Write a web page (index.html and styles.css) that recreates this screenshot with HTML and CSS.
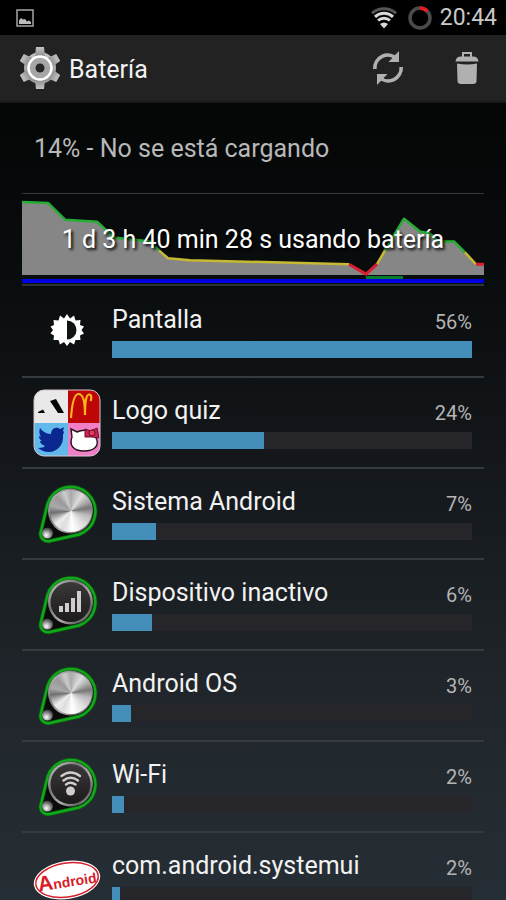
FILE: index.html
```html
<!DOCTYPE html>
<html lang="es">
<head>
<meta charset="utf-8">
<meta name="viewport" content="width=device-width, initial-scale=1">
<title>Batería</title>
<link rel="stylesheet" href="styles.css">
</head>
<body>
<svg class="defs" aria-hidden="true">
  <defs>
    <linearGradient id="gearFill" x1="0" y1="0" x2="0" y2="1">
      <stop offset="0" stop-color="#c4c4c4"/><stop offset="1" stop-color="#8f8f8f"/>
    </linearGradient>
    <linearGradient id="rimFill" x1="0" y1="0" x2="1" y2="1">
      <stop offset="0" stop-color="#d8d8d8"/><stop offset=".35" stop-color="#777"/>
      <stop offset=".6" stop-color="#b5acb0"/><stop offset=".8" stop-color="#666"/><stop offset="1" stop-color="#ccc"/>
    </linearGradient>
    <linearGradient id="darkFill" x1="0" y1="0" x2="0" y2="1">
      <stop offset="0" stop-color="#3a3838"/><stop offset="1" stop-color="#1c1a1a"/>
    </linearGradient>
    <radialGradient id="ballFill" cx=".4" cy=".7" r=".7">
      <stop offset="0" stop-color="#fff"/><stop offset=".35" stop-color="#bbb"/><stop offset="1" stop-color="#333"/>
    </radialGradient>
    <clipPath id="tile"><rect x="1" y="1" width="66" height="66" rx="10"/></clipPath>
    <symbol id="knob" viewBox="0 0 68 68">
      <path d="M14.500 24 A24.500 24.500 0 1 1 46 54.500 L17 61 A7.500 7.500 0 0 1 7.500 53 Z" fill="#0a0c0a" stroke="#0b5a10" stroke-width="4" stroke-linejoin="round"/>
      <path d="M14.500 24 A24.500 24.500 0 1 1 46 54.500 L17 61 A7.500 7.500 0 0 1 7.500 53 Z" fill="none" stroke="#12a81b" stroke-width="2.400" stroke-linejoin="round"/>
      <circle cx="14.500" cy="53" r="5.500" fill="url(#ballFill)"/>
      <circle cx="37.500" cy="31" r="22.500" fill="url(#rimFill)"/>
    </symbol>
  </defs>
</svg>

<div class="screen">
  <div class="status">
    <svg class="status-photo" viewBox="0 0 18 18" aria-label="Captura"><rect x="1" y="1" width="16" height="16" fill="none" stroke="#a5a5a5" stroke-width="1.500"/><path d="M3 15V11.500L5 9 7 10.500 9 10 11 12.500 13 11.500 15 13V15Z" fill="#bdbdbd"/></svg>
    <svg class="status-wifi" viewBox="0 0 28 22" aria-label="Wi-Fi">
      <g fill="none" stroke-width="3">
        <path d="M2 6.300A18 18 0 0 1 26 6.300" stroke="#555"/>
        <path d="M5 9.800A13.500 13.500 0 0 1 23 9.800" stroke="#d8d8d8"/>
        <path d="M8 13.500A9 9 0 0 1 20 13.500" stroke="#d8d8d8"/>
      </g>
      <path d="M10 17A6 6 0 0 1 18 17L14 21.500Z" fill="#d8d8d8"/>
    </svg>
    <svg class="status-ring" viewBox="0 0 24 24" aria-label="Batería 14 %"><circle cx="12" cy="12" r="10" fill="none" stroke="#4b4b4b" stroke-width="3.500"/><path d="M12 2A10 10 0 0 1 19.300 5.200" fill="none" stroke="#e81c1c" stroke-width="3.500"/></svg>
    <time>20:44</time>
  </div>

  <header class="bar">
    <svg class="gear" viewBox="0 0 42 44" aria-hidden="true">
      <g fill="url(#gearFill)">
        <circle cx="21" cy="22" r="16"/>
        <path id="tooth" d="M17 1H25L26 10H16Z"/>
        <use href="#tooth" transform="rotate(60 21 22)"/>
        <use href="#tooth" transform="rotate(120 21 22)"/>
        <use href="#tooth" transform="rotate(180 21 22)"/>
        <use href="#tooth" transform="rotate(240 21 22)"/>
        <use href="#tooth" transform="rotate(300 21 22)"/>
      </g>
      <circle cx="21" cy="22" r="11.500" fill="#a6a6a6" stroke="#fff" stroke-width="2.500"/>
      <circle cx="21" cy="22" r="4.500" fill="#262626"/>
    </svg>
    <h1>Batería</h1>
    <button type="button" aria-label="Actualizar">
      <svg viewBox="0 0 32 36"><g fill="none" stroke="#b0b0b0" stroke-width="3.600"><path d="M2.800 19A13 13 0 0 1 24.500 8.500"/><path d="M29.200 17A13 13 0 0 1 7.500 27.500"/></g><path d="M27 1V12H16.500Z" fill="#b0b0b0"/><path d="M5 35V24H15.500Z" fill="#b0b0b0"/></svg>
    </button>
    <button type="button" aria-label="Borrar">
      <svg viewBox="0 0 32 36"><path d="M12 7V3H20V7" fill="none" stroke="#b0b0b0" stroke-width="2"/><path d="M4.500 11.500Q5 6.500 10 6.500H22Q27 6.500 27.500 11.500Z" fill="#b0b0b0"/><path d="M6 13.500Q16 15.500 26 13.500L25.500 31Q25.500 34 22 34H10Q6.500 34 6.500 31Z" fill="#b0b0b0"/></svg>
    </button>
  </header>

  <main>
    <p class="summary">14% - No se está cargando</p>

    <a class="history" href="#historial">
      <svg viewBox="0 0 462 91" preserveAspectRatio="none" aria-hidden="true">
        <path d="M0 8L26 9 43 26 75 28 92 44 128 48 146 65 168 67 327 71 344 81 355 71 382 25 398 38 408 40 416 48 432 48 454 71H462V82H0Z" fill="#868686"/>
        <g fill="none" stroke-width="2.500" stroke-linejoin="round">
          <path d="M0 8L26 9 43 26 75 28 92 44 128 48 137 57M363 57L382 25 398 38 408 40 416 48 432 48 443 59" stroke="#27ad35"/>
          <path d="M137 57L146 65 168 67 327 71M355 71L363 57M443 59L454 71" stroke="#c8b932"/>
          <path d="M327 71L344 81 355 71M454 71H462" stroke="#d92030" stroke-width="3"/>
        </g>
        <path d="M344 84.500H381" stroke="#087c2c" stroke-width="3"/>
        <path d="M0 88H462" stroke="#0000e0" stroke-width="4"/>
      </svg>
      <span>1 d 3 h 40 min 28 s usando batería</span>
    </a>

    <ul class="apps">
      <li><a href="#pantalla">
        <svg class="icon" viewBox="0 0 68 68" aria-hidden="true">
          <path fill="#fff" d="M34 16L37 20.500 41 17.500 42.500 22.500 47.500 22 47 27 51 28.500 48.500 32 51 35.500 47 37.500 47.500 42 42.500 42 41 46.500 37 44 34 48 31 44 27 46.500 25.500 42 20.500 42 21 37.500 17.500 35.500 20 32 17.500 28.500 21 27 20.500 22 25.500 22.500 27 17.500 31 20.500Z"/>
          <path d="M34 22.500A9.500 9.500 0 0 1 34 41.500Z" fill="#101314"/>
        </svg>
        <span class="name">Pantalla</span><span class="share">56%</span>
        <span class="track"><span class="fill" style="width:100%"></span></span>
      </a></li>

      <li><a href="#logo-quiz">
        <svg class="icon" viewBox="0 0 68 68" aria-hidden="true">
          <g clip-path="url(#tile)">
            <path d="M0 0H35V34H0Z" fill="#e9e9e9"/>
            <path d="M35 0H68V34H35Z" fill="#bf0606"/>
            <path d="M0 34H35V68H0Z" fill="#60b9ea"/>
            <path d="M35 34H68V68H35Z" fill="#f07fc6"/>
            <path d="M17 12L23 10 31 24H25ZM5 23L10 20.500 12 24H5Z" fill="#080808"/>
            <path d="M38 29C39 15 41 5 45.500 5C50 5 52 13 52 26C52 13 53 5 56.500 5.500C59 6 58.500 10 57.500 12" fill="none" stroke="#f7b51b" stroke-width="2.200"/>
            <path d="M7 39C10 43 14 45 18 45C18 40 23 37 27 40C29 39 30 39 31 38L30 42 31 43 30 46C31 56 24 63 16 63C11 63 8 61 5 59C9 59 11 58 12 57C9 56 7 54 7 52H9C6 50 6 48 6 47L8 48C6 45 6 42 7 39Z" fill="#0a268f"/>
            <path d="M38 40L44 43Q50 40 56 42L62 41 63 49C67 57 61 62 51 62C40 62 36 56 39 48Z" fill="#fff" stroke="#24151c" stroke-width="1.400"/>
            <path d="M52 40L58 42 64 39 66 49 59 48 52 48Z" fill="#d2214d" stroke="#5f1029"/>
            <circle cx="59" cy="44" r="3" fill="#e83a62" stroke="#5f1029"/>
          </g>
          <rect x="1" y="1" width="66" height="66" rx="10" fill="none" stroke="#d8c5cd"/>
        </svg>
        <span class="name">Logo quiz</span><span class="share">24%</span>
        <span class="track"><span class="fill" style="width:42.2%"></span></span>
      </a></li>

      <li><a href="#sistema">
        <span class="icon metal"><svg viewBox="0 0 68 68" aria-hidden="true"><use href="#knob"/></svg></span>
        <span class="name">Sistema Android</span><span class="share">7%</span>
        <span class="track"><span class="fill" style="width:12.1%"></span></span>
      </a></li>

      <li><a href="#inactivo">
        <svg class="icon" viewBox="0 0 68 68" aria-hidden="true"><use href="#knob"/><circle cx="37.500" cy="31" r="20" fill="url(#darkFill)"/><path d="M26 35H30V41H26ZM32 32H36V41H32ZM38 27H42V41H38ZM44 20H48V41H44Z" fill="#cfcdcd"/></svg>
        <span class="name">Dispositivo inactivo</span><span class="share">6%</span>
        <span class="track"><span class="fill" style="width:11.2%"></span></span>
      </a></li>

      <li><a href="#android-os">
        <span class="icon metal"><svg viewBox="0 0 68 68" aria-hidden="true"><use href="#knob"/></svg></span>
        <span class="name">Android OS</span><span class="share">3%</span>
        <span class="track"><span class="fill" style="width:5.2%"></span></span>
      </a></li>

      <li><a href="#wifi">
        <svg class="icon" viewBox="0 0 68 68" aria-hidden="true"><use href="#knob"/><circle cx="37.500" cy="31" r="20" fill="url(#darkFill)"/><g fill="none" stroke="#cfcdcd" stroke-width="2.400" stroke-linecap="round"><path d="M28.500 23Q37.500 16 47 23"/><path d="M30.500 27.500Q37.500 22 45 27.500"/><path d="M33 31.500Q37.500 28 42.500 31.500"/></g><circle cx="37.500" cy="38" r="4.500" fill="#cfcdcd"/></svg>
        <span class="name">Wi-Fi</span><span class="share">2%</span>
        <span class="track"><span class="fill" style="width:3.3%"></span></span>
      </a></li>

      <li><a href="#systemui">
        <svg class="icon" viewBox="0 0 68 68" aria-hidden="true"><g transform="rotate(-9 34 36)"><ellipse cx="34" cy="36" rx="33.500" ry="19" fill="#fff"/><ellipse cx="34" cy="36" rx="31.500" ry="17" fill="none" stroke="#d3202b" stroke-width="1.500"/><text class="brand" x="34" y="43" text-anchor="middle"><tspan class="brand-cap">A</tspan>ndroid</text></g></svg>
        <span class="name">com.android.systemui</span><span class="share">2%</span>
        <span class="track"><span class="fill" style="width:2.2%"></span></span>
      </a></li>
    </ul>
  </main>
</div>
</body>
</html>
```
FILE: styles.css
```css
* { box-sizing: border-box; }

body {
  margin: 0;
  background: #000;
  color: #f2f2f2;
  font-family: Roboto, "Noto Sans", sans-serif;
}

a { color: inherit; text-decoration: none; }
svg { display: block; }

.defs { position: absolute; width: 0; height: 0; }

.screen {
  display: flex;
  flex-direction: column;
  height: 100vh;
  overflow: hidden;
  background: linear-gradient(#040606 12%, #0a0d0e 32%, #14181c 52%, #20262b 78%, #262e35);
}

.status {
  display: flex;
  flex: none;
  align-items: center;
  height: 35px;
  padding: 0 9px 0 16px;
  background: #000;
}

.status-photo { width: 18px; height: 18px; margin-right: auto; }
.status-wifi { width: 28px; height: 22px; margin-right: 10px; }
.status-ring { width: 24px; height: 24px; margin-right: 8px; }

.status time { font-size: 23px; line-height: 34px; color: #c9c9c9; }

.bar {
  display: flex;
  flex: none;
  align-items: center;
  height: 68px;
  padding: 0 23px 0 19px;
  background: #222;
  border-bottom: 2px solid #181a1a;
}

.gear { width: 42px; height: 44px; }

.bar h1 {
  flex: 1;
  margin: 0;
  padding: 4px 0 0 8px;
  font-size: 25px;
  font-weight: 400;
  line-height: 34px;
}

.bar button {
  width: 32px;
  height: 48px;
  margin-left: 47px;
  padding: 0;
  border: 0;
  background: none;
}

.bar button svg { width: 32px; height: 36px; }

main {
  flex: 1;
  min-height: 0;
  padding: 0 22px;
  overflow: hidden;
}

.summary {
  height: 91px;
  margin: 0;
  padding: 0 12px;
  border-bottom: 1px solid #353737;
  color: #b8b8b8;
  font-size: 25px;
  line-height: 92px;
}

.history {
  display: grid;
  height: 92px;
  border-bottom: 2px solid #2f3334;
}

.history svg,
.history span { grid-area: 1 / 1; }

.history svg { width: 100%; height: 90px; }

.history span {
  color: #fff;
  font-size: 25px;
  line-height: 92px;
  text-align: center;
  white-space: nowrap;
  text-shadow: 2px 2px 3px #000;
}

.apps { margin: 0; padding: 1px 0 0; list-style: none; }

.apps a {
  display: grid;
  grid-template-columns: 68px 1fr auto;
  grid-template-rows: 32px 17px;
  row-gap: 5px;
  column-gap: 11px;
  height: 91px;
  padding: 17px 12px 0 11px;
  border-bottom: 2px solid #353a3e;
}

.icon {
  grid-row: 1 / 3;
  align-self: start;
  width: 68px;
  height: 68px;
  margin-top: -6px;
}

.metal { display: grid; }
.metal svg,
.metal::after { grid-area: 1 / 1; }
.metal svg { width: 68px; height: 68px; }

.metal::after {
  content: "";
  width: 42px;
  height: 42px;
  margin: 10px 0 0 17px;
  border-radius: 50%;
  background: conic-gradient(#aaa, #ddd 35deg, #aaa 60deg, #777 80deg, #bbb 105deg, #ddd 135deg, #fff 175deg, #ddd 205deg, #eee 230deg, #aaa 250deg, #707070 265deg, #aaa 285deg, #999 315deg, #ccc 340deg, #aaa);
}

.name { font-size: 25px; line-height: 32px; white-space: nowrap; }

.share {
  color: #b4b4b4;
  font-size: 20px;
  line-height: 36px;
}

.track {
  grid-column: 2 / 4;
  background: #262529;
}

.fill {
  display: block;
  height: 100%;
  background: #448eba;
}

.brand {
  fill: #d91c28;
  font: bold 14px "Liberation Sans", sans-serif;
}

.brand-cap { font-size: 21px; }
```
